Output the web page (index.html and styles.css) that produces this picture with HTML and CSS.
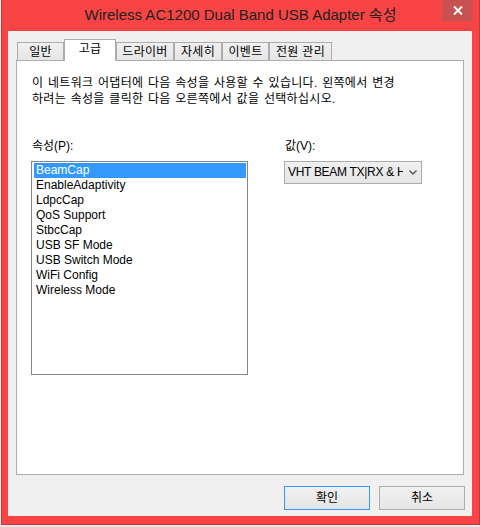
FILE: index.html
```html
<!DOCTYPE html>
<html lang="ko">
<head>
<meta charset="utf-8">
<link rel="stylesheet" href="styles.css">
</head>
<body>
<div class="window">
  <div class="titlebar">
    <span class="title">Wireless AC1200 Dual Band USB Adapter 속성</span>
    <div class="close">
      <svg width="10" height="9" viewBox="0 0 10 9"><path d="M1 0.5 L9 8.5 M9 0.5 L1 8.5" stroke="#fff" stroke-width="2" fill="none"/></svg>
    </div>
  </div>
  <div class="client">
    <div class="tabs">
      <div class="tab w1">일반</div>
      <div class="tab sel w2">고급</div>
      <div class="tab w3">드라이버</div>
      <div class="tab w4">자세히</div>
      <div class="tab w5">이벤트</div>
      <div class="tab w6">전원 관리</div>
    </div>
    <div class="panel">
      <p class="desc">이 네트워크 어댑터에 다음 속성을 사용할 수 있습니다. 왼쪽에서 변경<br>하려는 속성을 클릭한 다음 오른쪽에서 값을 선택하십시오.</p>
      <div class="cols">
        <div class="col-left">
          <div class="label">속성(P):</div>
          <ul class="list">
            <li class="item selected">BeamCap</li>
            <li class="item">EnableAdaptivity</li>
            <li class="item">LdpcCap</li>
            <li class="item">QoS Support</li>
            <li class="item">StbcCap</li>
            <li class="item">USB SF Mode</li>
            <li class="item">USB Switch Mode</li>
            <li class="item">WiFi Config</li>
            <li class="item">Wireless Mode</li>
          </ul>
        </div>
        <div class="col-right">
          <div class="label">값(V):</div>
          <div class="select">
            <span class="select-text">VHT BEAM TX|RX &amp; HT BEAM TX|RX</span>
            <svg class="chev" width="8" height="5" viewBox="0 0 8 5"><path d="M0.5 0.5 L4 4 L7.5 0.5" stroke="#555" stroke-width="1.4" fill="none"/></svg>
          </div>
        </div>
      </div>
    </div>
    <div class="buttons">
      <div class="btn default">확인</div>
      <div class="btn">취소</div>
    </div>
  </div>
</div>
</body>
</html>
```
FILE: styles.css
```css
html, body {
  margin: 0;
  padding: 0;
}
body {
  background: #e9e9e9;
  font-family: "Liberation Sans", "Noto Sans CJK KR", sans-serif;
  font-size: 12px;
  color: #000;
}
.window {
  position: relative;
  margin-left: 1px;
  width: 479px;
  height: 525px;
  box-sizing: border-box;
  background: #f84444;
  border-left: 1px solid #c23a3a;
  border-right: 1px solid #c23a3a;
  border-bottom: 1px solid #c23a3a;
  padding: 0 7px 8px 6px;
  display: flex;
  flex-direction: column;
}
.titlebar {
  height: 31px;
  display: flex;
  align-items: center;
  justify-content: center;
  margin-left: -7px;
  margin-right: -8px;
}
.title {
  font-family: "Liberation Sans", "Noto Sans CJK KR", sans-serif;
  font-size: 15px;
  color: #222;
  line-height: 20px;
  margin-top: -1px;
}
.close {
  position: absolute;
  top: 0;
  right: 6px;
  width: 31px;
  height: 21px;
  background: #c75050;
  display: flex;
  align-items: center;
  justify-content: center;
}
.client {
  flex: 1;
  background: #f0f0f0;
  padding-top: 8px;
  display: flex;
  flex-direction: column;
}
.tabs {
  display: flex;
  align-items: flex-end;
  height: 22px;
  margin-left: 9px;
  margin-bottom: -1px;
}
.tab {
  box-sizing: border-box;
  height: 19px;
  border: 1px solid #acacac;
  border-bottom: none;
  background: linear-gradient(#f0f0f0, #e5e5e5);
  display: flex;
  align-items: center;
  justify-content: center;
  line-height: 15px;
  padding-top: 1px;
  letter-spacing: 0.3px;
}
.tab.sel {
  position: relative;
  z-index: 1;
  height: 22px;
  background: #fff;
  padding-top: 0;
  padding-bottom: 2px;
}
.w1 { width: 47px; }
.w2 { width: 52px; }
.w3 { width: 58px; }
.w4 { width: 48px; }
.w5 { width: 47px; }
.w6 { width: 63px; }
.panel {
  margin-left: 8px;
  width: 448px;
  height: 415px;
  box-sizing: border-box;
  border: 1px solid #adadad;
  background: #fff;
  padding: 14px 0 0 14px;
}
.desc {
  margin: 0 0 0 1px;
  line-height: 16px;
  letter-spacing: 0.3px;
  word-spacing: 1px;
}
.cols {
  display: flex;
  gap: 36px;
  margin-top: 31px;
}
.label {
  line-height: 16px;
  margin-bottom: 7px;
  padding-left: 1px;
}
.list {
  list-style: none;
  margin: 0;
  width: 217px;
  height: 214px;
  box-sizing: border-box;
  border: 1px solid #828790;
  padding: 1px 1px 1px 2px;
}
.item {
  line-height: 15px;
  height: 15px;
  padding-left: 2px;
  white-space: nowrap;
}
.item.selected {
  background: #3399ff;
  color: #fff;
}
.select {
  width: 138px;
  height: 23px;
  box-sizing: border-box;
  border: 1px solid #acacac;
  background: linear-gradient(#f0f0f0, #e5e5e5);
  display: flex;
  align-items: center;
  padding-left: 3px;
}
.select-text {
  width: 115px;
  overflow: hidden;
  white-space: nowrap;
  line-height: 15px;
  letter-spacing: -0.3px;
}
.chev {
  margin-left: 6px;
}
.buttons {
  display: flex;
  justify-content: flex-end;
  gap: 9px;
  margin-top: 11px;
  margin-right: 7px;
}
.btn {
  width: 86px;
  height: 24px;
  box-sizing: border-box;
  border: 1px solid #acacac;
  background: linear-gradient(#f0f0f0, #e5e5e5);
  display: flex;
  align-items: center;
  justify-content: center;
  line-height: 15px;
}
.btn.default {
  border-color: #3399ff;
}
```
